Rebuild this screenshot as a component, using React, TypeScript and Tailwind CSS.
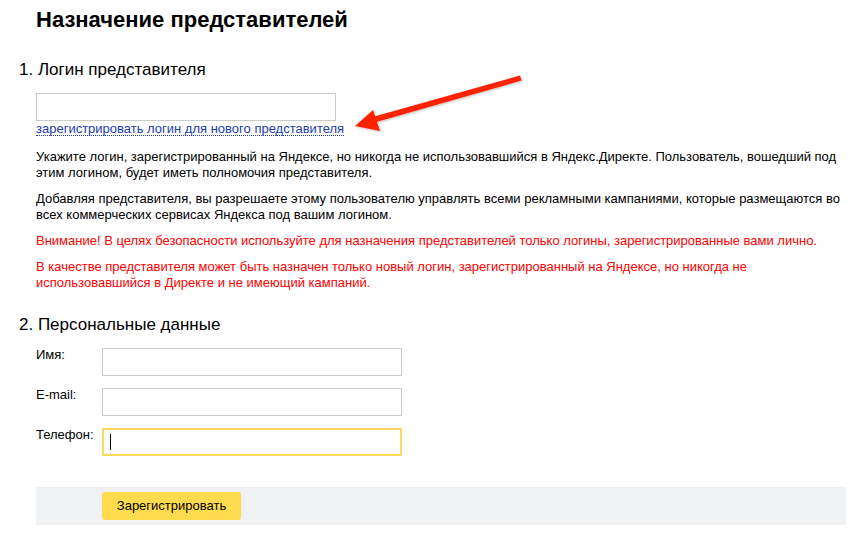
export default function App() {
  return (
    <div className="relative min-h-screen bg-white text-black" style={{ fontFamily: '"Liberation Sans", Arial, sans-serif' }}>
      <div className="pl-[36px] pr-[17px] pt-[7px]">
        <h1 className="text-[22px] font-bold leading-[26px]">Назначение представителей</h1>

        <h2 className="-ml-[17px] mt-[26px] text-[17px] leading-[22px]">1. Логин представителя</h2>
        <input className="mt-[12px] block h-[28px] w-[300px] border border-[#ccc] outline-none" />
        <a href="#" className="mt-px block w-fit border-b border-dotted border-[#1c3cb0] text-[13px] leading-[13px] text-[#1c3cb0]">
          зарегистрировать логин для нового представителя
        </a>

        <div className="mt-[13px] flex flex-col gap-[10px] text-[13px] leading-[16px]">
          <p>
            Укажите логин, зарегистрированный на Яндексе, но никогда не использовавшийся в Яндекс.Директе. Пользователь, вошедший под этим логином, будет иметь полномочия представителя.
          </p>
          <p>
            Добавляя представителя, вы разрешаете этому пользователю управлять всеми рекламными кампаниями, которые размещаются во всех коммерческих сервисах Яндекса под вашим логином.
          </p>
          <p className="text-[#ff0000]">
            Внимание! В целях безопасности используйте для назначения представителей только логины, зарегистрированные вами лично.
          </p>
          <p className="text-[#ff0000]">
            В качестве представителя может быть назначен только новый логин, зарегистрированный на Яндексе, но никогда не использовавшийся в Директе и не имеющий кампаний.
          </p>
        </div>

        <h2 className="-ml-[17px] mt-[23px] text-[17px] leading-[22px]">2. Персональные данные</h2>
        <div className="mt-[12px] flex flex-col gap-[12px] text-[13px] leading-[14px]">
          <div className="flex">
            <span className="w-[66px]">Имя:</span>
            <input className="h-[28px] w-[300px] border border-[#ccc] outline-none" />
          </div>
          <div className="flex">
            <span className="w-[66px]">E-mail:</span>
            <input className="h-[28px] w-[300px] border border-[#ccc] outline-none" />
          </div>
          <div className="flex">
            <span className="w-[66px]">Телефон:</span>
            <div className="flex h-[28px] w-[300px] items-center border-2 border-[#fdd85b] pl-[6px]">
              <span className="h-[16px] w-px bg-black" />
            </div>
          </div>
        </div>

        <div className="mt-[31px] w-[810px] bg-[#f0f1f3] py-[5px] pl-[66px]">
          <button className="h-[28px] w-[139px] rounded-[3px] bg-[#ffdb4d] text-[13px]">Зарегистрировать</button>
        </div>
      </div>

      <svg className="absolute left-[340px] top-[65px]" width="200" height="80" viewBox="340 65 200 80">
        <defs>
          <filter id="sh" x="-10%" y="-20%" width="130%" height="150%">
            <feDropShadow dx="1" dy="1" stdDeviation="1" floodColor="#000" floodOpacity="0.25" />
          </filter>
        </defs>
        <g filter="url(#sh)" fill="#ff2200">
          <path d="M520 75.5 L369 118 L371 123.5 L521.5 80.5 Z" />
          <path d="M355 126 L373 110 L380 131 Z" />
        </g>
      </svg>
    </div>
  );
}
